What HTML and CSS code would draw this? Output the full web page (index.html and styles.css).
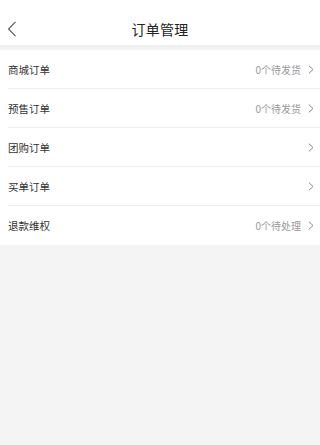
FILE: index.html
```html
<!DOCTYPE html>
<html lang="zh">
<head>
<meta charset="utf-8">
<meta name="viewport" content="width=device-width, initial-scale=1">
<link rel="stylesheet" href="styles.css">
</head>
<body>
<div class="page">
  <header class="bar">
    <span class="back">
      <svg width="10" height="16" viewBox="0 0 10 16"><path d="M8.5 0.8 L1.5 8 L8.5 15.2" fill="none" stroke="#555" stroke-width="1.1"/></svg>
    </span>
    <h1 class="title">订单管理</h1>
  </header>
  <div class="gap"></div>
  <ul class="list">
    <li class="row"><span class="label">商城订单</span><span class="right"><span class="note">0个待发货</span><svg class="chev" width="6" height="9" viewBox="0 0 6 9"><path d="M0.8 0.6 L5 4.5 L0.8 8.4" fill="none" stroke="#888" stroke-width="1"/></svg></span></li>
    <li class="row"><span class="label">预售订单</span><span class="right"><span class="note">0个待发货</span><svg class="chev" width="6" height="9" viewBox="0 0 6 9"><path d="M0.8 0.6 L5 4.5 L0.8 8.4" fill="none" stroke="#888" stroke-width="1"/></svg></span></li>
    <li class="row"><span class="label">团购订单</span><span class="right"><svg class="chev" width="6" height="9" viewBox="0 0 6 9"><path d="M0.8 0.6 L5 4.5 L0.8 8.4" fill="none" stroke="#888" stroke-width="1"/></svg></span></li>
    <li class="row"><span class="label">买单订单</span><span class="right"><svg class="chev" width="6" height="9" viewBox="0 0 6 9"><path d="M0.8 0.6 L5 4.5 L0.8 8.4" fill="none" stroke="#888" stroke-width="1"/></svg></span></li>
    <li class="row"><span class="label">退款维权</span><span class="right"><span class="note">0个待处理</span><svg class="chev" width="6" height="9" viewBox="0 0 6 9"><path d="M0.8 0.6 L5 4.5 L0.8 8.4" fill="none" stroke="#888" stroke-width="1"/></svg></span></li>
  </ul>
</div>
</body>
</html>
```
FILE: styles.css
```css
html, body {
  margin: 0;
  padding: 0;
  background: #f3f4f3;
  font-family: "Noto Sans CJK SC", "Noto Sans", sans-serif;
}
.page {
  width: 100%;
  min-height: 100vh;
  background: #f3f4f3;
}
.bar {
  height: 45px;
  box-sizing: border-box;
  padding-top: 12px;
  background: #fff;
  display: flex;
  align-items: center;
  justify-content: center;
  position: relative;
}
.back {
  position: absolute;
  left: 7px;
  top: 21px;
  display: flex;
}
.title {
  margin: 0;
  font-size: 14px;
  font-weight: 400;
  color: #222;
  line-height: 20px;
  letter-spacing: 0.2px;
}
.gap {
  height: 5px;
  background: linear-gradient(#eceded, #f5f6f5);
}
.list {
  list-style: none;
  margin: 0;
  padding: 0 0 0 8px;
  background: #fff;
}
.row {
  height: 39px;
  box-sizing: border-box;
  display: flex;
  align-items: center;
  justify-content: space-between;
  padding-right: 6px;
  border-bottom: 1px solid #eeeeee;
}
.row:last-child {
  border-bottom: none;
}
.label {
  font-size: 10.5px;
  color: #333;
}
.right {
  display: flex;
  align-items: center;
  gap: 7px;
}
.note {
  font-size: 10px;
  color: #999;
}
.chev {
  display: block;
}
```
